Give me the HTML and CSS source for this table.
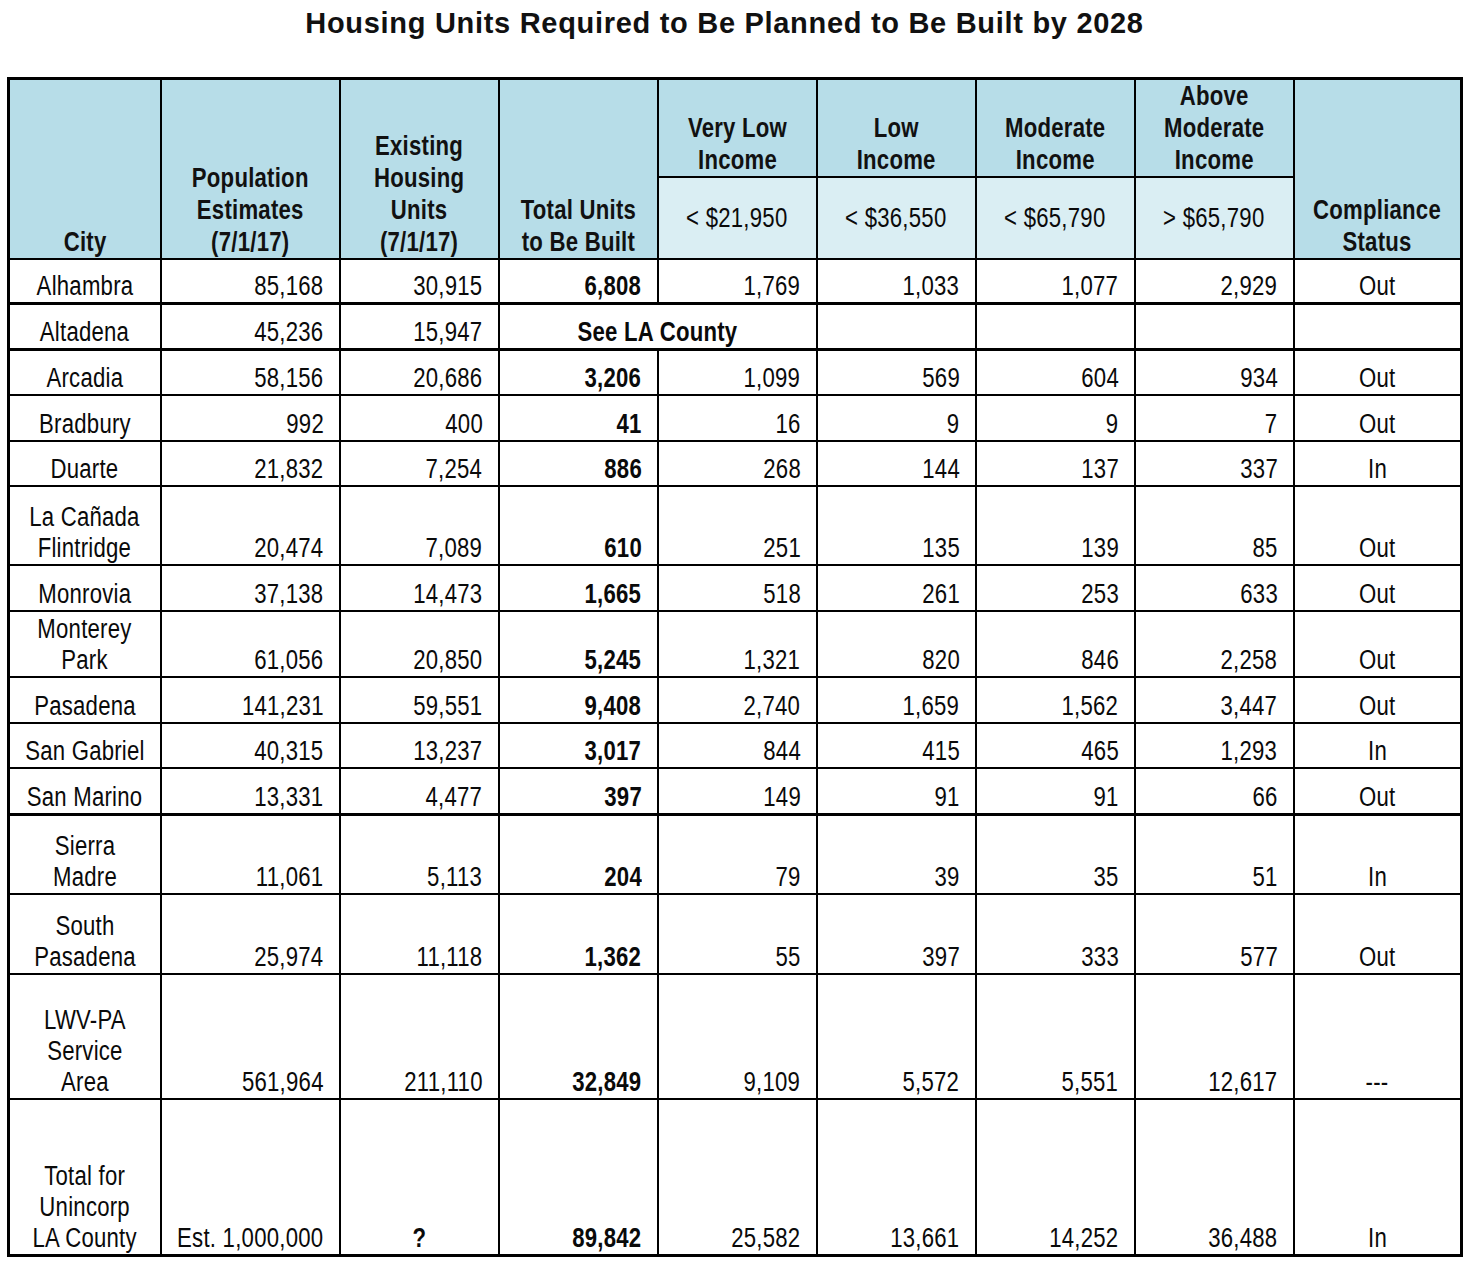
FILE: index.html
```html
<!DOCTYPE html>
<html lang="en">
<head>
<meta charset="utf-8">
<title>Housing Units Required to Be Planned to Be Built by 2028</title>
<link rel="stylesheet" href="styles.css">
</head>
<body>
<h1 class="title">Housing Units Required to Be Planned to Be Built by 2028</h1>
<table class="rhna">
  <colgroup>
    <col class="c-city">
    <col class="c-pop">
    <col class="c-std">
    <col class="c-std">
    <col class="c-std">
    <col class="c-std">
    <col class="c-std">
    <col class="c-std">
    <col class="c-status">
  </colgroup>
  <thead>
    <tr class="hr1">
      <th rowspan="2"><span class="t">City</span></th>
      <th rowspan="2"><span class="t">Population<br>Estimates<br>(7/1/17)</span></th>
      <th rowspan="2"><span class="t">Existing<br>Housing<br>Units<br>(7/1/17)</span></th>
      <th rowspan="2"><span class="t">Total Units<br>to Be Built</span></th>
      <th><span class="t">Very Low<br>Income</span></th>
      <th><span class="t">Low<br>Income</span></th>
      <th><span class="t">Moderate<br>Income</span></th>
      <th><span class="t">Above<br>Moderate<br>Income</span></th>
      <th rowspan="2"><span class="t">Compliance<br>Status</span></th>
    </tr>
    <tr class="hr2">
      <td><span class="t">&lt; $21,950</span></td>
      <td><span class="t">&lt; $36,550</span></td>
      <td><span class="t">&lt; $65,790</span></td>
      <td><span class="t">&gt; $65,790</span></td>
    </tr>
  </thead>
  <tbody>
    <tr class="r1s thick">
      <td class="city"><span class="t">Alhambra</span></td><td class="num"><span class="t">85,168</span></td><td class="num"><span class="t">30,915</span></td><td class="num b"><span class="t">6,808</span></td><td class="num"><span class="t">1,769</span></td><td class="num"><span class="t">1,033</span></td><td class="num"><span class="t">1,077</span></td><td class="num"><span class="t">2,929</span></td><td class="st"><span class="t">Out</span></td>
    </tr>
    <tr class="r1 thick">
      <td class="city"><span class="t">Altadena</span></td><td class="num"><span class="t">45,236</span></td><td class="num"><span class="t">15,947</span></td><td class="see" colspan="2"><span class="t">See LA County</span></td><td></td><td></td><td></td><td></td>
    </tr>
    <tr class="r1">
      <td class="city"><span class="t">Arcadia</span></td><td class="num"><span class="t">58,156</span></td><td class="num"><span class="t">20,686</span></td><td class="num b"><span class="t">3,206</span></td><td class="num"><span class="t">1,099</span></td><td class="num"><span class="t">569</span></td><td class="num"><span class="t">604</span></td><td class="num"><span class="t">934</span></td><td class="st"><span class="t">Out</span></td>
    </tr>
    <tr class="r1t">
      <td class="city"><span class="t">Bradbury</span></td><td class="num"><span class="t">992</span></td><td class="num"><span class="t">400</span></td><td class="num b"><span class="t">41</span></td><td class="num"><span class="t">16</span></td><td class="num"><span class="t">9</span></td><td class="num"><span class="t">9</span></td><td class="num"><span class="t">7</span></td><td class="st"><span class="t">Out</span></td>
    </tr>
    <tr class="r1">
      <td class="city"><span class="t">Duarte</span></td><td class="num"><span class="t">21,832</span></td><td class="num"><span class="t">7,254</span></td><td class="num b"><span class="t">886</span></td><td class="num"><span class="t">268</span></td><td class="num"><span class="t">144</span></td><td class="num"><span class="t">137</span></td><td class="num"><span class="t">337</span></td><td class="st"><span class="t">In</span></td>
    </tr>
    <tr class="r2">
      <td class="city"><span class="t">La Cañada<br>Flintridge</span></td><td class="num"><span class="t">20,474</span></td><td class="num"><span class="t">7,089</span></td><td class="num b"><span class="t">610</span></td><td class="num"><span class="t">251</span></td><td class="num"><span class="t">135</span></td><td class="num"><span class="t">139</span></td><td class="num"><span class="t">85</span></td><td class="st"><span class="t">Out</span></td>
    </tr>
    <tr class="r1t">
      <td class="city"><span class="t">Monrovia</span></td><td class="num"><span class="t">37,138</span></td><td class="num"><span class="t">14,473</span></td><td class="num b"><span class="t">1,665</span></td><td class="num"><span class="t">518</span></td><td class="num"><span class="t">261</span></td><td class="num"><span class="t">253</span></td><td class="num"><span class="t">633</span></td><td class="st"><span class="t">Out</span></td>
    </tr>
    <tr class="r2s">
      <td class="city"><span class="t">Monterey<br>Park</span></td><td class="num"><span class="t">61,056</span></td><td class="num"><span class="t">20,850</span></td><td class="num b"><span class="t">5,245</span></td><td class="num"><span class="t">1,321</span></td><td class="num"><span class="t">820</span></td><td class="num"><span class="t">846</span></td><td class="num"><span class="t">2,258</span></td><td class="st"><span class="t">Out</span></td>
    </tr>
    <tr class="r1t">
      <td class="city"><span class="t">Pasadena</span></td><td class="num"><span class="t">141,231</span></td><td class="num"><span class="t">59,551</span></td><td class="num b"><span class="t">9,408</span></td><td class="num"><span class="t">2,740</span></td><td class="num"><span class="t">1,659</span></td><td class="num"><span class="t">1,562</span></td><td class="num"><span class="t">3,447</span></td><td class="st"><span class="t">Out</span></td>
    </tr>
    <tr class="r1">
      <td class="city"><span class="t">San Gabriel</span></td><td class="num"><span class="t">40,315</span></td><td class="num"><span class="t">13,237</span></td><td class="num b"><span class="t">3,017</span></td><td class="num"><span class="t">844</span></td><td class="num"><span class="t">415</span></td><td class="num"><span class="t">465</span></td><td class="num"><span class="t">1,293</span></td><td class="st"><span class="t">In</span></td>
    </tr>
    <tr class="r1t thick">
      <td class="city"><span class="t">San Marino</span></td><td class="num"><span class="t">13,331</span></td><td class="num"><span class="t">4,477</span></td><td class="num b"><span class="t">397</span></td><td class="num"><span class="t">149</span></td><td class="num"><span class="t">91</span></td><td class="num"><span class="t">91</span></td><td class="num"><span class="t">66</span></td><td class="st"><span class="t">Out</span></td>
    </tr>
    <tr class="r2">
      <td class="city"><span class="t">Sierra<br>Madre</span></td><td class="num"><span class="t">11,061</span></td><td class="num"><span class="t">5,113</span></td><td class="num b"><span class="t">204</span></td><td class="num"><span class="t">79</span></td><td class="num"><span class="t">39</span></td><td class="num"><span class="t">35</span></td><td class="num"><span class="t">51</span></td><td class="st"><span class="t">In</span></td>
    </tr>
    <tr class="r2t">
      <td class="city"><span class="t">South<br>Pasadena</span></td><td class="num"><span class="t">25,974</span></td><td class="num"><span class="t">11,118</span></td><td class="num b"><span class="t">1,362</span></td><td class="num"><span class="t">55</span></td><td class="num"><span class="t">397</span></td><td class="num"><span class="t">333</span></td><td class="num"><span class="t">577</span></td><td class="st"><span class="t">Out</span></td>
    </tr>
    <tr class="r3">
      <td class="city"><span class="t">LWV-PA<br>Service<br>Area</span></td><td class="num"><span class="t">561,964</span></td><td class="num"><span class="t">211,110</span></td><td class="num b"><span class="t">32,849</span></td><td class="num"><span class="t">9,109</span></td><td class="num"><span class="t">5,572</span></td><td class="num"><span class="t">5,551</span></td><td class="num"><span class="t">12,617</span></td><td class="st"><span class="t">---</span></td>
    </tr>
    <tr class="r4">
      <td class="city"><span class="t">Total for<br>Unincorp<br>LA County</span></td><td class="num"><span class="t">Est. 1,000,000</span></td><td class="st b"><span class="t">?</span></td><td class="num b"><span class="t">89,842</span></td><td class="num"><span class="t">25,582</span></td><td class="num"><span class="t">13,661</span></td><td class="num"><span class="t">14,252</span></td><td class="num"><span class="t">36,488</span></td><td class="st"><span class="t">In</span></td>
    </tr>
  </tbody>
</table>
</body>
</html>
```

FILE: styles.css
```css
html, body {
  margin: 0;
  padding: 0;
  background: #ffffff;
}

body {
  font-family: "Liberation Sans", Arial, sans-serif;
  color: #0a0a0a;
}

.title {
  margin: 0;
  padding: 6px 24px 0 0;
  height: 71px;
  box-sizing: content-box;
  font-weight: bold;
  font-size: 29px;
  letter-spacing: 0.7px;
  line-height: 34px;
  text-align: center;
  color: #111;
}

.rhna {
  margin-left: 7px;
  border-collapse: collapse;
  table-layout: fixed;
  width: 1455px;
  border: 3px solid #000;
  font-size: 27px;
  letter-spacing: 0.3px;
}

.c-city { width: 152px; }
.c-pop { width: 179px; }
.c-std { width: 159px; }
.c-status { width: 168px; }

.rhna th,
.rhna td {
  border: 2px solid #000;
  padding: 0;
  white-space: nowrap;
}

/* Arial Narrow is Arial condensed to 82% width */
.t {
  display: inline-block;
  transform: scaleX(0.82);
  transform-origin: center bottom;
  direction: ltr;
}

.rhna th {
  background: #b7dde8;
  font-weight: bold;
  line-height: 32px;
  text-align: center;
  vertical-align: bottom;
  color: #111;
}

.hr1 th { height: 93px; }

.hr2 td {
  background: #daeef3;
  height: 80px;
  text-align: center;
  vertical-align: middle;
  line-height: 32px;
}

.rhna tbody td {
  line-height: 31px;
  vertical-align: bottom;
}

.r1s td { height: 42px; }
.r1 td { height: 43px; }
.r1t td { height: 44px; }
.r2 td { height: 77px; }
.r2t td { height: 78px; }
.r2s td { height: 64px; }
.r3 td { height: 123px; }
.r4 td { height: 154px; }

.thick td { border-bottom-width: 3px; }

.city {
  text-align: center;
  padding: 0 2px;
}

.num {
  text-align: right;
  direction: rtl;
  padding-right: 15px !important;
}

.num .t { transform-origin: right bottom; }

.b { font-weight: bold; }

.st { text-align: center; }

.see {
  text-align: center;
  font-weight: bold;
}
```
